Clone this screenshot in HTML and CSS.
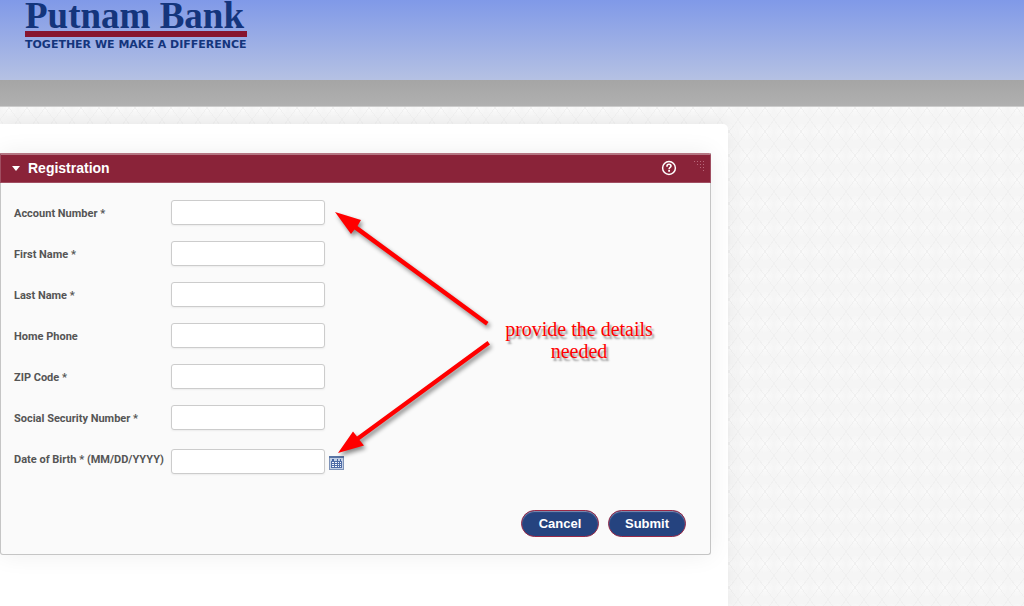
FILE: index.html
```html
<!DOCTYPE html>
<html lang="en">
<head>
<meta charset="utf-8">
<meta name="viewport" content="width=device-width, initial-scale=1">
<title>Putnam Bank - Registration</title>
<link rel="stylesheet" href="styles.css">
</head>
<body>
<header class="masthead">
  <div class="logo">
    <div class="logo-name">Putnam Bank</div>
    <div class="logo-tagline">TOGETHER WE MAKE A DIFFERENCE</div>
  </div>
</header>
<div class="navbar"></div>
<main class="sheet">
  <section class="panel">
    <div class="panel-head">
      <span class="caret"></span>
      <h1 class="panel-title">Registration</h1>
      <button class="help" type="button" aria-label="Help">
        <svg width="16" height="16" viewBox="0 0 16 16" fill="none" stroke="#fff">
          <circle cx="8" cy="8" r="6.4" stroke-width="1.5"/>
          <path d="M6 6.7V6.1C6 4.9 6.8 4.3 8 4.3S10 5 10 6.1C10 7.5 8.1 7.4 8.1 9.2" stroke-width="1.6"/>
          <path d="M7.2 10.9h1.8" stroke-width="1.6"/>
        </svg>
      </button>
      <svg class="grip" width="11" height="11" viewBox="0 0 11 11" fill="#b8687a">
        <path d="M0 0h1v1H0zM3 0h1v1H3zM6 0h1v1H6zM9 0h1v1H9zM3 3h1v1H3zM6 3h1v1H6zM9 3h1v1H9zM6 6h1v1H6zM9 6h1v1H9zM9 9h1v1H9z"/>
      </svg>
    </div>
    <form class="form">
      <div class="row"><label for="account">Account Number *</label><input id="account" type="text"></div>
      <div class="row"><label for="first">First Name *</label><input id="first" type="text"></div>
      <div class="row"><label for="last">Last Name *</label><input id="last" type="text"></div>
      <div class="row"><label for="phone">Home Phone</label><input id="phone" type="text"></div>
      <div class="row"><label for="zip">ZIP Code *</label><input id="zip" type="text"></div>
      <div class="row"><label for="ssn">Social Security Number *</label><input id="ssn" type="text"></div>
      <div class="row row-date">
        <label for="dob">Date of Birth * (MM/DD/YYYY)</label><input id="dob" type="text">
        <button class="calendar" type="button" aria-label="Choose date">
          <svg width="15" height="14" viewBox="0 0 15 14">
            <rect x=".5" y=".5" width="14" height="13" fill="#c3d0e6" stroke="#7e93b8"/>
            <path d="M0 0h15v2H0z" fill="#5a75a4"/>
            <path d="M2 5h11v7H2z" fill="#4f6ca6"/>
            <path d="M3 3h2v2H3zM8 3h1v2H8zM11 3h1v2h-1z" fill="#4464a2"/>
            <path d="M3 6h2v1H3zM6 6h2v1H6zM9 6h1v1H9zM11 6h1v1h-1zM3 8h2v1H3zM6 8h2v1H6zM9 8h1v1H9zM11 8h1v1h-1zM3 10h2v1H3zM6 10h2v1H6zM9 10h1v1H9zM11 10h1v1h-1z" fill="#f5f8fd"/>
          </svg>
        </button>
      </div>
      <div class="actions">
        <button class="pill" type="button">Cancel</button>
        <button class="pill" type="submit">Submit</button>
      </div>
    </form>
    <svg class="arrows" width="180" height="260" viewBox="330 205 180 260" fill="#f00" aria-hidden="true">
      <path d="M335 212L361 220L357.500 226L488.500 322L486 325.500L354.500 229.500L351 234Z"/>
      <path d="M338 453L353 431.500L357 436.500L487.500 341L490 344.500L359.500 440L364 445.500Z"/>
    </svg>
    <p class="note">provide the details needed</p>
  </section>
</main>
</body>
</html>
```
FILE: styles.css
```css
* {
  box-sizing: border-box;
}

body {
  margin: 0;
  min-height: 100vh;
  display: flex;
  flex-direction: column;
  font-family: "Liberation Sans", Arial, sans-serif;
  background-color: #f5f5f5;
  background-image:
    linear-gradient(53deg, transparent 49%, #f0f0f0 49%, #f0f0f0 52%, transparent 52%),
    linear-gradient(-53deg, transparent 49%, #f0f0f0 49%, #f0f0f0 52%, transparent 52%),
    radial-gradient(circle, #f9f9f9 10%, transparent 60%);
  background-size: 18px 24px;
}

.masthead {
  height: 80px;
  padding-left: 25px;
  background: linear-gradient(#8099e8, #b5c1e3);
}

.logo {
  width: max-content;
  color: #14357c;
}

.logo-name {
  font: bold 37px/31px "Liberation Serif", "Times New Roman", serif;
  border-bottom: 6px solid #87152f;
}

.logo-tagline {
  font: bold 11px/16px "DejaVu Sans", Verdana, sans-serif;
  white-space: nowrap;
}

.navbar {
  height: 27px;
  background: linear-gradient(#a5a5a5, #b0b0b0);
  border-bottom: 1px solid #ccc;
}

.sheet {
  flex: 1;
  width: 100%;
  max-width: 728px;
  margin-top: 17px;
  padding: 29px 17px 52px 0;
  background: #fff;
  border-radius: 0 5px 0 0;
  box-shadow: 0 0 16px rgba(0, 0, 0, 0.06);
}

.panel {
  position: relative;
  background: #fafafa;
  border: 1px solid #c5c5c5;
  border-top: 0;
  border-radius: 0 0 3px 3px;
  box-shadow: 0 0 24px rgba(0, 0, 0, 0.07);
}

.panel-head {
  display: flex;
  align-items: center;
  height: 30px;
  margin: 0 -1px;
  padding: 0 5px 1px 11px;
  color: #fff;
  background: #8a2339;
  border: 1px solid #a04e61;
  border-top: 2px solid #b57683;
  border-radius: 0 2px 0 0;
}

.caret {
  border: 4px solid transparent;
  border-top: 5px solid #fff;
  border-bottom: 0;
}

.panel-title {
  flex: 1;
  margin: 0 0 0 8px;
  font-size: 14px;
  line-height: 20px;
}

.help,
.calendar {
  padding: 0;
  border: 0;
  background: none;
  line-height: 0;
}

.grip {
  margin: 0 0 4px 17px;
}

.form {
  display: flex;
  flex-direction: column;
  gap: 16px;
  padding: 17px 24px 17px 13px;
}

.row {
  display: flex;
  align-items: center;
}

.row label {
  width: 157px;
  padding-top: 3px;
  color: #555;
  font: bold 11px/16px Roboto, "Arial Narrow", sans-serif;
  white-space: nowrap;
}

.row input {
  width: 154px;
  height: 25px;
  padding: 0 6px;
  font: 12px "Liberation Sans", Arial, sans-serif;
  background: #fff;
  border: 1px solid #ccc;
  border-radius: 3px;
  box-shadow: 0 1px 2px rgba(0, 0, 0, 0.06);
}

.row-date input {
  margin-top: 3px;
}

.row-date label {
  padding-bottom: 4px;
}

.calendar {
  margin: 6px 0 0 4px;
}

.actions {
  display: flex;
  justify-content: flex-end;
  gap: 9px;
  margin-top: 20px;
}

.pill {
  width: 78px;
  height: 27px;
  padding: 0;
  color: #fff;
  font: bold 13px "Liberation Sans", Arial, sans-serif;
  background: #25437f;
  border: 1px solid #9a2947;
  border-radius: 14px;
  box-shadow: inset 0 1px 1px #7f91b4;
}

.arrows {
  position: absolute;
  left: 329px;
  top: 52px;
  pointer-events: none;
  filter: drop-shadow(2px 3px 2px rgba(0, 0, 0, 0.45));
}

.note {
  position: absolute;
  left: 498px;
  top: 165px;
  width: 160px;
  margin: 0;
  color: #f00;
  font: 20px/22px "Liberation Serif", "Times New Roman", serif;
  text-align: center;
  text-shadow: 2px 3px 2px rgba(0, 0, 0, 0.4);
}
```
